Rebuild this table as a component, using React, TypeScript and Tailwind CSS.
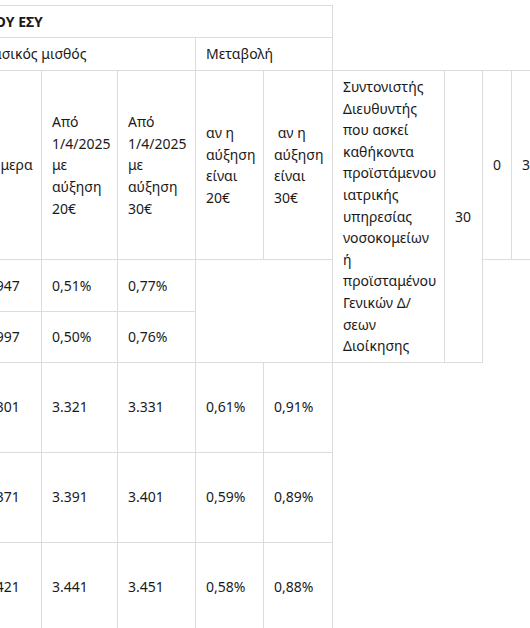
import React from "react";

// Πίνακας αυξήσεων βασικού μισθού γιατρών ΕΣΥ — εμφανίζεται κομμένος αριστερά (οριζόντιο scroll).
const cell = "border border-[#dcdcdc] px-[10px] align-middle";

type Row = { today: string; p20: string; p30: string; d20?: string; d30?: string; h: string };

const ROWS: Row[] = [
  { today: "3.947", p20: "0,51%", p30: "0,77%", h: "h-[51px]" },
  { today: "3.997", p20: "0,50%", p30: "0,76%", h: "h-[51px]" },
  { today: "3.301", p20: "3.321", p30: "3.331", d20: "0,61%", d30: "0,91%", h: "h-[90px]" },
  { today: "3.371", p20: "3.391", p30: "3.401", d20: "0,59%", d30: "0,89%", h: "h-[90px]" },
  { today: "3.421", p20: "3.441", p30: "3.451", d20: "0,58%", d30: "0,88%", h: "h-[90px]" },
];

const COORDINATOR = [
  "Συντονιστής",
  "Διευθυντής",
  "που ασκεί",
  "καθήκοντα",
  "προϊστάμενου",
  "ιατρικής",
  "υπηρεσίας",
  "νοσοκομείων",
  "ή",
  "προϊσταμένου",
  "Γενικών Δ/",
  "σεων",
  "Διοίκησης",
];

function Lines({ lines }: { lines: string[] }) {
  return (
    <>
      {lines.map((l, i) => (
        <React.Fragment key={i}>
          {i > 0 && <br />}
          {l}
        </React.Fragment>
      ))}
    </>
  );
}

export default function App() {
  return (
    <div
      className="h-[628px] w-[530px] overflow-hidden bg-white pt-[5px] text-[14px] leading-[21.6px] text-[#1a1a1a]"
      style={{ fontFamily: '"Noto Sans", "Open Sans", sans-serif' }}
    >
      <table className="-ml-[27px] w-[578px] table-fixed border-collapse">
        <colgroup>
          <col className="w-[68px]" />
          <col className="w-[76px]" />
          <col className="w-[78px]" />
          <col className="w-[68px]" />
          <col className="w-[69px]" />
          <col className="w-[112px]" />
          <col className="w-[38px]" />
          <col className="w-[29px]" />
          <col className="w-[40px]" />
        </colgroup>
        <tbody>
          <tr className="h-[32px]">
            <td colSpan={5} className={`${cell} pl-[13px] font-bold`}>
              ΤΟΥ ΕΣΥ
            </td>
          </tr>
          <tr className="h-[33px]">
            <td colSpan={3} className={cell}>
              Βασικός μισθός
            </td>
            <td colSpan={2} className={cell}>
              Μεταβολή
            </td>
          </tr>
          <tr className="h-[189px]">
            <td className={cell}>Σήμερα</td>
            <td className={cell}>
              <Lines lines={["Από", "1/4/2025", "με", "αύξηση", "20€"]} />
            </td>
            <td className={cell}>
              <Lines lines={["Από", "1/4/2025", "με", "αύξηση", "30€"]} />
            </td>
            <td className={cell}>
              <Lines lines={["αν η", "αύξηση", "είναι", "20€"]} />
            </td>
            <td className={cell}>
              <Lines lines={["\u00a0αν η", "αύξηση", "είναι", "30€"]} />
            </td>
            <td rowSpan={3} className={`${cell} py-[5px]`}>
              <Lines lines={COORDINATOR} />
            </td>
            <td rowSpan={3} className={cell}>
              30
            </td>
            <td className={cell}>0</td>
            <td className={cell}>30</td>
          </tr>
          {ROWS.map((r) => (
            <tr key={r.today} className={r.h}>
              <td className={cell}>{r.today}</td>
              <td className={cell}>{r.p20}</td>
              <td className={cell}>{r.p30}</td>
              {r.d20 && <td className={cell}>{r.d20}</td>}
              {r.d30 && <td className={cell}>{r.d30}</td>}
            </tr>
          ))}
        </tbody>
      </table>
    </div>
  );
}
